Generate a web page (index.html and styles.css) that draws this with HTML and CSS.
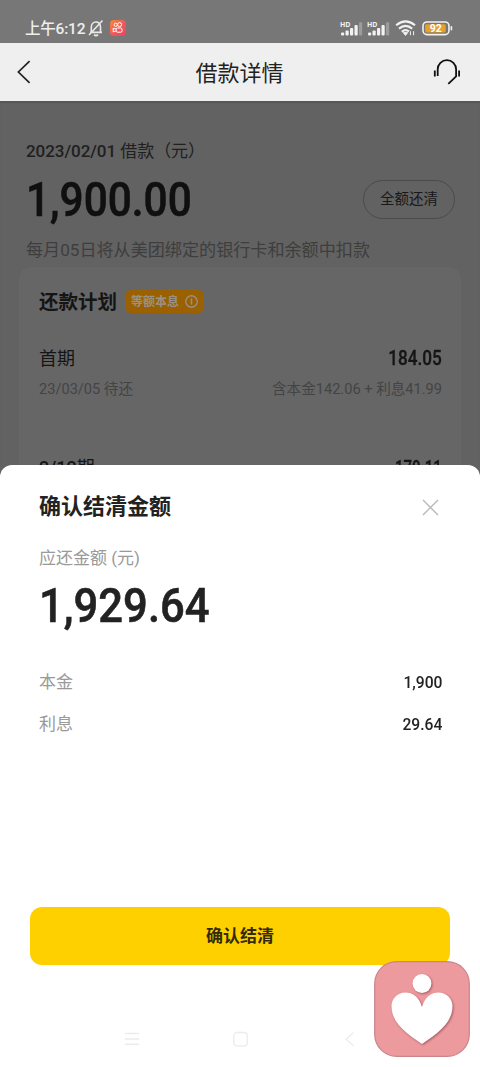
FILE: index.html
```html
<!DOCTYPE html>
<html lang="zh-CN">
<head>
<meta charset="utf-8">
<title>借款详情</title>
<link rel="stylesheet" href="styles.css">
</head>
<body>
<div class="screen">
  <header class="status">
    <span class="clock">上午6:12</span>
    <svg class="mute" width="16" height="18" viewBox="0 0 16 18" fill="none" stroke="#e8e8e8" stroke-width="1.6"><path d="M2 13.4h12M3.3 13V8.2C3.3 1.6 12.5 1 12.5 8v5M1 16L14.5 1.5"/><path d="M6 15.8q2 1.4 4 0" stroke-width="1.8"/></svg>
    <svg class="app" width="16" height="16" viewBox="0 0 16 16"><defs><linearGradient id="g" x2="1" y2="1"><stop stop-color="#f38b3d"/><stop offset=".55" stop-color="#f0575a"/><stop offset="1" stop-color="#ee405f"/></linearGradient></defs><rect width="16" height="16" rx="4" fill="url(#g)"/><g fill="none" stroke="#fff" stroke-width="1"><circle cx="5.7" cy="4.8" r="1.6"/><circle cx="9.6" cy="4.6" r="2"/><rect x="6.2" y="8" width="5.8" height="4.2" rx="1.2"/><path d="M6 9L3.2 8.3v3.5L6 11"/></g></svg>
    <span class="grow"></span>
    <svg class="signal" width="23" height="17" viewBox="0 0 23 17"><text x="0" y="6.6" class="hd" textLength="10.5" lengthAdjust="spacingAndGlyphs">HD</text><g fill="#f2f2f2"><rect x="1" y="12.5" width="3.2" height="3" rx="1"/><rect x="5.5" y="10.5" width="3.2" height="5" rx="1"/><rect x="10" y="8" width="3.2" height="7.5" rx="1"/><rect x="14.5" y="5" width="3.2" height="10.5" rx="1"/><rect x="19" y="2.2" width="3.2" height="13.3" rx="1" opacity=".3"/></g></svg>
    <svg class="signal two" width="23" height="17" viewBox="0 0 23 17"><text x="0" y="6.6" class="hd" textLength="10.5" lengthAdjust="spacingAndGlyphs">HD</text><g fill="#f2f2f2"><rect x="1" y="12.5" width="3.2" height="3" rx="1"/><rect x="5.5" y="10.5" width="3.2" height="5" rx="1"/><rect x="10" y="8" width="3.2" height="7.5" rx="1"/><rect x="14.5" y="5" width="3.2" height="10.5" rx="1"/><rect x="19" y="2.2" width="3.2" height="13.3" rx="1" opacity=".3"/></g></svg>
    <svg class="wifi" width="22" height="17" viewBox="0 0 22 17" fill="none" stroke="#f2f2f2" stroke-width="2.1"><path d="M1.2 5.2Q10.5-2.6 20 5.2M4 8.6Q10.5 3 17.2 8.6M6.8 11.8Q10.5 8.6 14 11.4"/><path d="M8.3 12.6h4.4L10.5 15.4zM15.4 11.2v4M18.6 11.2v4" fill="#f2f2f2" stroke-width="1"/></svg>
    <svg class="battery" width="31" height="15" viewBox="0 0 31 15"><rect x="1" y="1" width="26" height="12.6" rx="4" fill="none" stroke="#f2f2f2" stroke-width="1.6"/><rect x="3.2" y="3.2" width="20.5" height="8.2" rx="1.4" fill="#e6a02c"/><rect x="28.6" y="5" width="1.6" height="4.5" rx=".8" fill="#f2f2f2"/><text x="13.8" y="11" class="pct">92</text></svg>
  </header>
  <nav class="nav">
    <svg width="14" height="24" viewBox="0 0 14 24" fill="none" stroke="#222" stroke-width="1.7"><path d="M12.6 1.2L1.4 12l11.2 10.8"/></svg>
    <h1 class="title">借款详情</h1>
    <svg width="28" height="26" viewBox="0 0 28 26" fill="none" stroke="#111" stroke-width="1.8"><path d="M4.7 17V10.3a9.2 9.2 0 0 1 18.4 0v7L15.3 24.8"/><path d="M1.8 11.6v5.8M26.1 11.6v5.8"/></svg>
  </nav>
  <main class="page">
    <div class="loan-date"><b>2023/02/01</b> 借款（元）</div>
    <div class="loan-row"><span class="amount loan-amount">1,900.00</span><button class="payoff">全额还清</button></div>
    <p class="notice">每月05日将从美团绑定的银行卡和余额中扣款</p>
    <section class="card">
      <div class="card-head"><h2>还款计划</h2><span class="tag">等额本息<svg width="13" height="13" viewBox="0 0 12 12" fill="none" stroke="#999184"><circle cx="6" cy="6" r="5.3" stroke-width="1.2"/><path d="M6 3.2v5.6" stroke-width="1.4"/></svg></span></div>
      <div class="term"><span>首期</span><b class="din">184.05</b></div>
      <div class="detail"><span>23/03/05 待还</span><span>含本金142.06 + 利息41.99</span></div>
      <div class="term next"><span><i>2/12</i>期</span><b class="din">170.11</b></div>
    </section>
  </main>
  <section class="sheet">
    <div class="sheet-head"><h2>确认结清金额</h2><svg width="17" height="17" viewBox="0 0 17 17" stroke="#b8b8b8" stroke-width="1.4"><path d="M1 1l15 15M16 1L1 16"/></svg></div>
    <div class="due">应还金额 (元)</div>
    <div class="due-amount"><span class="amount">1,929.64</span></div>
    <div class="line"><span>本金</span><b class="din">1,900</b></div>
    <div class="line"><span>利息</span><b class="din">29.64</b></div>
    <button class="confirm">确认结清</button>
    <footer class="keys">
      <svg width="16" height="16" viewBox="0 0 16 16" stroke="#ececec" stroke-width="1.4"><path d="M1 2.5h14M1 8h14M1 13.2h14"/></svg>
      <svg width="16" height="16" viewBox="0 0 16 16" fill="none" stroke="#ececec" stroke-width="1.3"><rect x=".8" y="1.5" width="13.4" height="13.4" rx="3"/></svg>
      <svg width="16" height="16" viewBox="0 0 16 16" fill="none" stroke="#ececec" stroke-width="1.3"><path d="M11.5 1.5L4 8.3l7.5 6.5"/></svg>
    </footer>
  </section>
  <svg class="float" width="96" height="96" viewBox="0 0 96 96"><rect x=".7" y=".7" width="94.6" height="94.6" rx="22" fill="#ec9a9e" stroke="#c9858a" stroke-width="1.2"/><g class="mark" fill="#fff"><circle cx="48" cy="22.5" r="9.4"/><path d="M48 46C45 36 39 31.5 31.5 31.5C23 31.5 17.5 38 17.5 45C17.5 62 32 72 48 83C64 72 78.5 62 78.5 45C78.5 38 73 31.5 64.5 31.5C57 31.5 51 36 48 46Z"/></g></svg>
</div>
</body>
</html>
```
FILE: styles.css
```css
* { box-sizing: border-box; }
body { margin: 0; font-family: Roboto, "Noto Sans CJK SC", sans-serif; }
h1, h2, p { margin: 0; }
i { font-style: normal; }
button { border: 0; padding: 0; font-family: inherit; }
svg { display: block; flex: none; }
.screen { position: relative; width: 480px; height: 1067px; overflow: hidden; background: #626262; display: flex; flex-direction: column; }
.status { height: 43px; flex: none; background: #777; display: flex; align-items: center; padding: 13px 27px 0 25px; }
.clock { width: 60px; padding-top: 1px; font: 500 15.5px/22px Roboto, "Noto Sans CJK SC", sans-serif; letter-spacing: -.2px; color: #eee; white-space: nowrap; }
.mute { margin-left: 3px; }
.app { margin-left: 6px; }
.grow { flex: 1; }
.hd { font: 700 7.5px "Open Sans", sans-serif; fill: #f2f2f2; }
.pct { font: 700 10.5px Roboto, sans-serif; fill: #fff; text-anchor: middle; }
.two { margin-left: 4px; }
.wifi { margin-left: 5px; }
.battery { margin-left: 5px; }
.nav { height: 58px; flex: none; background: #efefef; display: flex; align-items: center; justify-content: space-between; padding: 0 19px 0 17px; }
.title { font-size: 22px; line-height: 30px; font-weight: 400; color: #222; padding: 3px 0 0 15px; }
.page { height: 364px; flex: none; padding: 38px 19px 0; overflow: hidden; box-shadow: inset 0 2px 1px #575757; }
.loan-date { height: 24px; padding-left: 7px; font-size: 17px; line-height: 25px; letter-spacing: -.05px; color: #202020; }
.loan-date b { font-weight: 500; }
.loan-row { height: 72px; padding: 0 6px 0 7px; display: flex; align-items: center; justify-content: space-between; }
.amount { display: block; font: 500 49px/56px Roboto, sans-serif; color: #222; -webkit-text-stroke: .6px currentColor; transform-origin: left; transform: scaleX(.89); }
.loan-amount { color: #101010; padding-top: 2px; transform: scaleX(.865); }
.payoff { width: 92px; height: 39px; padding-bottom: 4px; border: 1px solid #4b4b4b; border-radius: 20px; background: none; font-size: 14.5px; color: #191919; }
.notice { height: 32px; padding: 1px 0 0 7px; font-size: 17.1px; line-height: 28px; color: #3e3e3e; }
.card { height: 300px; border-radius: 12px; background: #666; padding: 18px 19px 0 20px; }
.card-head { height: 32px; display: flex; align-items: center; }
.card-head h2 { font-size: 19.5px; font-weight: 700; color: #151515; padding-bottom: 2px; }
.tag { width: 79px; height: 23px; margin-left: 8px; margin-top: 1px; border-radius: 6px; background: #9b6100; color: #999184; font-size: 12px; line-height: 20px; font-weight: 700; display: flex; align-items: center; justify-content: center; gap: 6px; }
.term { height: 28px; margin-top: 26px; display: flex; justify-content: space-between; align-items: center; font-size: 18px; color: #151515; }
.din { font-weight: 500; transform-origin: right; transform: scaleX(.92); }
.term .din { font-size: 19.5px; padding-top: 3px; transform: scaleX(.88); -webkit-text-stroke: .3px currentColor; }
.detail { height: 24px; margin-top: 4px; display: flex; justify-content: space-between; align-items: center; font-size: 14.6px; color: #444; }
.next { margin-top: 53px; }
.next i { font-weight: 500; }
.term.next .din { padding-top: 4px; transform: scaleX(.77); }
.sheet { flex: 1; border-radius: 12px 12px 0 0; background: #fff; padding: 26px 30px 0; display: flex; flex-direction: column; }
.sheet-head { height: 32px; padding: 0 11px 0 9px; display: flex; justify-content: space-between; align-items: center; }
.sheet-head h2 { font-size: 22px; font-weight: 700; color: #222; line-height: 30px; }
.due { margin-top: 22px; padding-left: 9px; font-size: 17px; line-height: 26px; color: #999; }
.due-amount { height: 56px; margin-top: 7px; padding-left: 9px; }
.line { height: 26px; margin-top: 16px; padding: 0 8px 0 9px; display: flex; justify-content: space-between; align-items: center; font-size: 17px; color: #999; }
.line span { padding-bottom: 2px; }
.due-amount + .line { margin-top: 34px; }
.line .din { padding-top: 1px; color: #222; }
.confirm { height: 58px; margin: 171px 0 0 0; padding-bottom: 3px; border-radius: 12px; background: #ffd000; color: #332b08; font-size: 17px; font-weight: 700; flex: none; }
.keys { display: flex; justify-content: space-between; padding: 66px 92px 0 94px; }
.float { position: absolute; left: 374px; top: 961px; }
.mark { filter: drop-shadow(1px 1px 1px rgba(120, 50, 60, .6)); }
```
